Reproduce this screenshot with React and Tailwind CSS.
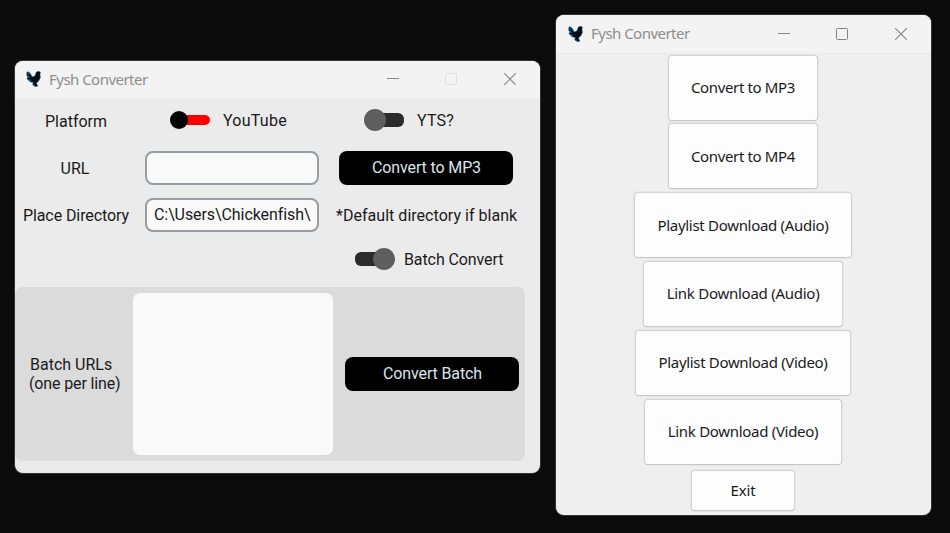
import React from "react";

function Rooster() {
  return (
    <svg width="18" height="18" viewBox="0 0 18 18" className="shrink-0">
      <path
        d="M2 1.8 4.4 2.4 5.8 4.4 7 6.8 9 6.4 10.4 5 11.2 2.2 13.2 1.2 15.4 2 15 4.4 15.4 7.6 14 10.6 12 12.4 11.4 13.8 12.8 15.2 12.2 16.4H9.8L7.6 14.6 8.4 12.6 5 11.8 3.2 9.8 2 9 2.8 6.8 1.6 4.8Z"
        fill="#030c14"
        stroke="#1f5d84"
        strokeOpacity=".5"
        strokeWidth="1"
      />
      <path d="M2.4 2.8 4.2 4.6M2.6 6 4.4 7.8M3.6 9.4 6 11M8.4 14.8 10 15.8" stroke="#1d6a9c" strokeWidth="1.2" />
    </svg>
  );
}

function TitleBar({ height, dim }) {
  return (
    <header className={`flex shrink-0 items-center bg-[#f3f3f3] ${height} ${dim ? "pl-[10px]" : "pl-[11px]"}`}>
      <span className="mb-px">
        <Rooster />
      </span>
      <h1 className="ml-[6px] whitespace-nowrap pb-[2px] font-['Noto_Sans','Open_Sans',sans-serif] text-[15px] leading-5 tracking-[-0.53px] text-[#8e8e8e]">
        Fysh Converter
      </h1>
      <div className="mb-px ml-auto flex h-3 items-center pr-[24px]">
        <svg width="12" height="12" viewBox="0 0 12 12">
          <path d="M0 5.5H12" stroke="#8a8a8a" />
        </svg>
        <svg width="12" height="12" viewBox="0 0 12 12" className="mr-[47px] ml-[46px]">
          <rect x=".5" y=".5" width="11" height="11" rx="1" fill="none" stroke={dim ? "#e0e0e0" : "#858585"} />
        </svg>
        <svg width="12" height="12" viewBox="0 0 12 12">
          <path d="M.2.2 11.8 11.8M11.8.2.2 11.8" stroke="#858585" strokeWidth="1.1" />
        </svg>
      </div>
    </header>
  );
}

function Toggle({ on }) {
  return (
    <span className={`flex h-[22px] w-10 shrink-0 items-center ${on ? "flex-row-reverse" : ""}`}>
      <span className="z-10 h-[22px] w-[22px] shrink-0 rounded-full bg-[#5e5e5e]" />
      <span className={`h-[14px] w-[29px] shrink-0 bg-[#2b2b2b] ${on ? "-mr-[11px] rounded-l-[6px]" : "-ml-[11px] rounded-r-[6px]"}`} />
    </span>
  );
}

function BlackButton({ children }) {
  return (
    <button className="h-[34px] w-[174px] shrink-0 rounded-[8px] bg-black pb-px pl-px text-center tracking-[-0.13px] text-[#dce4ee]">
      {children}
    </button>
  );
}

function ConverterWindow() {
  return (
    <section className="mt-[61px] flex h-[412px] w-[525px] shrink-0 flex-col overflow-hidden rounded-[8px] bg-[#ebebeb] font-[Roboto,sans-serif] text-[16px] leading-[19px] whitespace-nowrap text-[#1a1a1a] shadow-[0_0_0_1px_#333]">
      <TitleBar height="h-[37px]" dim />
      <div className="flex h-[44px] items-center">
        <span className="w-[122px] pt-[2px] text-center">Platform</span>
        <span className="ml-[33px] flex items-center">
          <span className="z-10 h-[18px] w-[18px] rounded-full bg-black" />
          <span className="-ml-[9px] h-[10px] w-[31px] rounded-r-[5px] bg-[#ff0000]" />
        </span>
        <span className="ml-[13px] w-[65px] pt-px tracking-[0.25px]">YouTube</span>
        <span className="ml-[76px] flex items-center gap-[13px]">
          <Toggle />
          <span className="pt-px tracking-[0.2px]">YTS?</span>
        </span>
      </div>
      <div className="mt-[9px] flex h-[34px] items-center">
        <span className="w-[120px] text-center">URL</span>
        <input className="ml-[10px] h-[34px] w-[174px] rounded-[8px] border-2 border-[#979da2] bg-[#f9f9fa]" />
        <span className="ml-[20px]">
          <BlackButton>Convert to MP3</BlackButton>
        </span>
      </div>
      <div className="mt-[13px] flex h-[34px] items-center">
        <span className="w-[122px] text-center tracking-[-0.08px]">Place Directory</span>
        <input
          readOnly
          value={"C:\\Users\\Chickenfish\\"}
          className="ml-[8px] h-[34px] w-[174px] rounded-[8px] border-2 border-[#979da2] bg-[#f9f9fa] pb-px pl-[7px] tracking-[-0.08px]"
        />
        <span className="ml-[17px] tracking-[0.03px]">*Default directory if blank</span>
      </div>
      <div className="mt-[16px] ml-[340px] flex h-[22px] items-center gap-[9px] tracking-[-0.1px]">
        <Toggle on />
        Batch Convert
      </div>
      <div className="mt-[17px] flex h-[174px] w-[510px] items-center rounded-[8px] bg-[#dbdbdb]">
        <p className="ml-[14px] w-[104px] pb-px">
          <span className="block pl-px">Batch URLs</span>
          <span className="block tracking-[-0.14px]">(one per line)</span>
        </p>
        <textarea className="block h-[162px] w-[200px] resize-none rounded-[7px] bg-[#f9f9fa]" />
        <span className="ml-[12px]">
          <BlackButton>Convert Batch</BlackButton>
        </span>
      </div>
    </section>
  );
}

const actions = [
  { label: "Convert to MP3", size: "w-[150px] h-[66px] tracking-[-0.36px]" },
  { label: "Convert to MP4", size: "w-[150px] h-[66px] tracking-[-0.36px]" },
  { label: "Playlist Download (Audio)", size: "w-[218px] h-[66px] tracking-[-0.3px]" },
  { label: "Link Download (Audio)", size: "w-[200px] h-[66px] tracking-[-0.26px]" },
  { label: "Playlist Download (Video)", size: "w-[216px] h-[66px] tracking-[-0.33px]" },
  { label: "Link Download (Video)", size: "w-[198px] h-[66px] tracking-[-0.3px]" },
  { label: "Exit", size: "w-[104px] h-[41px] mt-[3px] tracking-[-0.2px]" },
];

function MenuWindow() {
  return (
    <section className="mt-[15px] ml-[16px] flex h-[500px] w-[375px] shrink-0 flex-col overflow-hidden rounded-[8px] bg-[#efefef] shadow-[0_0_0_1px_#333]">
      <TitleBar height="h-[38px]" />
      <div className="flex flex-col items-center gap-[2.8px] border-t border-[#e6ebef] pt-[0.6px] pr-px">
        {actions.map(({ label, size }) => (
          <button
            key={label}
            className={`shrink-0 rounded-[4px] border border-[#d3d3d3] border-b-[#c8c8c8] bg-[#fdfdfd] pb-px text-center font-['Noto_Sans','Open_Sans',sans-serif] text-[15px] leading-5 whitespace-nowrap text-[#1a1a1a] shadow-[0_0_0_1px_#e6e6e6] ${size}`}
          >
            {label}
          </button>
        ))}
      </div>
    </section>
  );
}

export default function App() {
  return (
    <main className="flex h-[533px] w-[950px] items-start overflow-hidden bg-[#0b0b0b] pl-[15px]">
      <ConverterWindow />
      <MenuWindow />
    </main>
  );
}
